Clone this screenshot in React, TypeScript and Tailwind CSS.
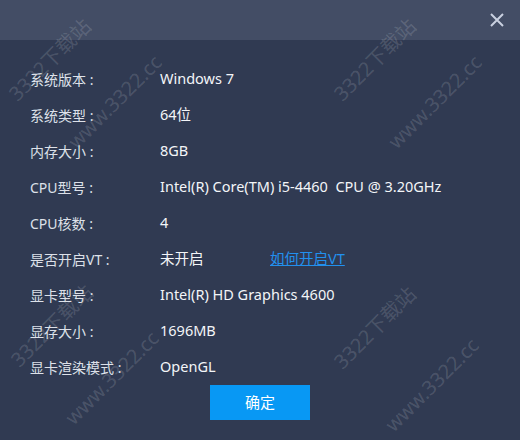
import React from "react";

const rows: { label: string; value: string; link?: string }[] = [
  { label: "系统版本 :", value: "Windows 7" },
  { label: "系统类型 :", value: "64位" },
  { label: "内存大小 :", value: "8GB" },
  { label: "CPU型号 :", value: "Intel(R) Core(TM) i5-4460  CPU @ 3.20GHz" },
  { label: "CPU核数 :", value: "4" },
  { label: "是否开启VT :", value: "未开启", link: "如何开启VT" },
  { label: "显卡型号 :", value: "Intel(R) HD Graphics 4600" },
  { label: "显存大小 :", value: "1696MB" },
  { label: "显卡渲染模式 :", value: "OpenGL" },
];

// watermark stamps, centre points
const marks = [
  { text: "3322下载站", pos: "left-[50px] top-[60px]" },
  { text: "www.3322.cc", pos: "left-[115px] top-[102px]" },
  { text: "3322下载站", pos: "left-[375px] top-[60px]" },
  { text: "www.3322.cc", pos: "left-[435px] top-[102px]" },
  { text: "3322下载站", pos: "left-[52px] top-[326px]" },
  { text: "www.3322.cc", pos: "left-[112px] top-[378px]" },
  { text: "3322下载站", pos: "left-[375px] top-[328px]" },
  { text: "www.3322.cc", pos: "left-[432px] top-[385px]" },
];

export default function App() {
  return (
    <div
      className="relative w-[520px] h-[440px] overflow-hidden bg-[#303a52] text-[14px]"
      style={{ fontFamily: '"Noto Sans", "Noto Sans CJK SC", sans-serif' }}
    >
      {/* title bar */}
      <div className="h-10 bg-[#434d65] flex items-center justify-end pr-[15px]">
        <svg width="16" height="16" viewBox="0 0 16 16" className="text-[#c9d0e0]">
          <path d="M2 2 L14 14 M14 2 L2 14" stroke="currentColor" strokeWidth="2" />
        </svg>
      </div>

      <div className="pt-[21px] pl-[30px]">
        {rows.map((r) => (
          <div key={r.label} className="h-9 flex items-center">
            <span className="w-[130px] text-[#dde1e9]">{r.label}</span>
            <span className="w-[110px] text-[14.5px] text-[#f3f5f8] whitespace-pre">{r.value}</span>
            {r.link && <span className="text-[14.5px] text-[#2290ee] underline">{r.link}</span>}
          </div>
        ))}
      </div>

      <div className="flex justify-center">
        <button className="w-[100px] h-[35px] bg-[#0898f4] text-white text-[15px]">确定</button>
      </div>

      {marks.map((m, i) => (
        <span
          key={i}
          className={`absolute ${m.pos} -translate-x-1/2 -translate-y-1/2 -rotate-45 whitespace-nowrap text-[20px] text-white/15 pointer-events-none`}
        >
          {m.text}
        </span>
      ))}
    </div>
  );
}
